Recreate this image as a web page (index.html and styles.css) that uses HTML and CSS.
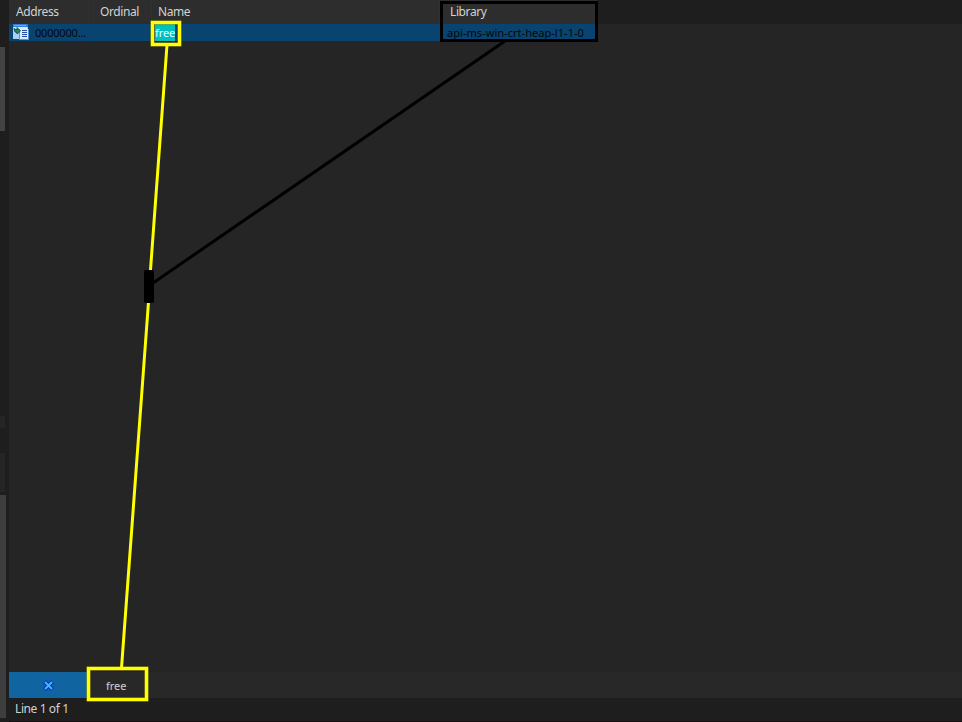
FILE: index.html
```html
<!DOCTYPE html>
<html lang="en">
<head>
<meta charset="utf-8">
<title>Imports</title>
<link rel="stylesheet" href="styles.css">
</head>
<body>
<div class="app">
  <aside class="gutter">
    <div class="thumb thumb-top"></div>
    <div class="thumb thumb-mid"></div>
    <div class="thumb thumb-low"></div>
    <div class="thumb thumb-bottom"></div>
  </aside>
  <main class="panel">
    <div class="head grid">
      <span class="address">Address</span><span>Ordinal</span><span>Name</span><span>Library</span><i></i>
    </div>
    <div class="row grid">
      <span class="cell-address">
        <svg class="icon" width="16" height="16" viewBox="0 0 16 16">
          <path fill="#a8d0f4" d="M0 0h15v15H0z"/>
          <path fill="#2f7dd6" d="M0 0h15v3H0z"/>
          <path fill="#5fb0f5" d="M1 1h12v1H1z"/>
          <path fill="#d7eafa" d="M1 3h13v2H1z"/>
          <path fill="#5a93d4" d="M6 5h10v11H6z"/>
          <path fill="#dcecff" d="M7 5h8v10H7z"/>
          <path stroke="#2450a8" d="M9 6.500h5M9 8.500h5M9 10.500h5M9 12.500h5"/>
          <path fill="#1c8a4c" stroke="#123f44" stroke-width=".8" d="M1 4.500l2 1h1V3.500l3.500 3.500L4 10V8.500L2 8z"/>
        </svg>
        <span>0000000...</span>
      </span>
      <span></span>
      <span class="cell-name"><mark>free</mark></span>
      <span class="cell-library">api-ms-win-crt-heap-l1-1-0</span>
      <i></i>
    </div>
    <div class="canvas"></div>
    <div class="filter">
      <div class="close">
        <svg width="11" height="11" viewBox="0 0 11 11">
          <path d="M1.500 1.500l8 8M9.500 1.500l-8 8" stroke="#0a35c8" stroke-width="4"/>
          <path d="M2 2l7 7M9 2L2 9" stroke="#48b5fc" stroke-width="1.800"/>
        </svg>
      </div>
      <span class="query">free</span>
    </div>
    <div class="status">Line 1 of 1</div>
  </main>
</div>
<svg class="annotations" width="962" height="722" viewBox="0 0 962 722">
  <g fill="none" stroke="#000" stroke-width="3">
    <path d="M505 41L153 283"/>
    <rect x="441.500" y="2.500" width="155" height="38"/>
  </g>
  <g fill="none" stroke="#a5a500" stroke-width="4">
    <rect x="152.500" y="22.500" width="27" height="22"/>
    <rect x="88.500" y="668.500" width="58" height="31"/>
  </g>
  <g fill="none" stroke="#ff0" stroke-width="3">
    <path d="M167 45L150.500 270M148.500 302L121.500 668"/>
    <rect x="152.500" y="22.500" width="27" height="22"/>
    <rect x="88.500" y="668.500" width="58" height="31"/>
  </g>
  <rect x="144" y="270" width="10" height="33" rx="2"/>
</svg>
</body>
</html>
```
FILE: styles.css
```css
* { box-sizing: border-box; }
body { margin: 0; overflow: hidden; background: #1e1e1e; font: 12px/17px "Noto Sans", sans-serif; color: #d2d2d2; }
.app { display: flex; width: 962px; height: 722px; }
.gutter { width: 9px; height: 718px; padding-top: 47px; background: #1e1e1e; }
.thumb { width: 5px; background: #252525; }
.thumb-top { height: 84px; background: #434343; }
.thumb-mid { margin-top: 285px; height: 12px; }
.thumb-low { margin-top: 25px; height: 39px; }
.thumb-bottom { margin-top: 3px; width: 6px; height: 223px; background: #3e3e3e; }
.panel { display: flex; flex: 1; flex-direction: column; }
.grid { display: grid; grid-template-columns: 85px 58px 288px 157px 1fr; }
.head { height: 24px; background: #2d2d2d; line-height: 24px; letter-spacing: -0.4px; }
.head span { padding-left: 6px; border-right: 1px solid #303030; }
.head .address { padding-left: 7px; }
.head span:nth-child(4) { padding-left: 10px; }
.head i { background: #1e1e1e; }
.row { height: 17px; background: #08446f; color: #02070c; font-size: 11px; line-height: 17px; }
.row i { background: #252525; }
.cell-address { display: flex; gap: 6px; padding-left: 4px; letter-spacing: -0.2px; }
.icon { flex: none; }
.cell-name { padding-left: 3px; }
mark { display: inline-block; height: 17px; background: #00bfc0; color: #e2ffff; letter-spacing: -0.1px; }
.cell-library { padding-left: 7px; white-space: nowrap; letter-spacing: 0.04px; }
.canvas { flex: 1; background: #252525; }
.filter { display: flex; height: 27px; border-top: 1px solid #202424; background: #282828; font-size: 11px; line-height: 28px; }
.close { display: flex; align-items: center; justify-content: center; width: 78px; background: #1064a0; }
.query { padding-left: 19px; }
.status { height: 24px; padding-left: 6px; border-bottom: 1px solid #160e10; line-height: 22px; letter-spacing: -0.4px; }
.annotations { position: absolute; top: 0; left: 0; }
```
